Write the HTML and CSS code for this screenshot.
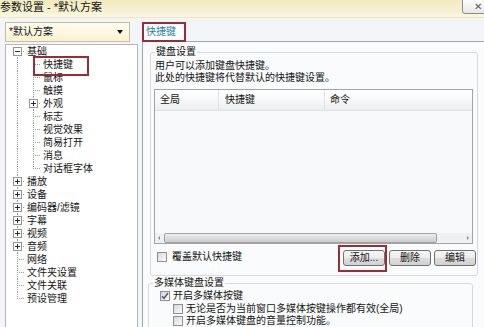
FILE: index.html
```html
<!DOCTYPE html>
<html lang="zh-CN">
<head>
  <meta charset="UTF-8">
  <meta name="viewport" content="width=device-width, initial-scale=1.0">
  <title>参数设置 - *默认方案</title>
  <link rel="stylesheet" href="styles.css">
</head>
<body>
  <div class="window">
    <div class="titlebar">
      <span class="title">参数设置 - *默认方案</span>
      <span class="close">✕</span>
    </div>

    <div class="main">
      <div class="side">
        <div class="combo">
          <span>*默认方案</span>
          <span class="arrow"></span>
        </div>

        <div class="tree">
          <div class="row"><i class="g f"><b class="bx minus"></b></i><span class="lbl">基础</span></div>
          <div class="row mark"><i class="g v"></i><i class="g t"></i><span class="lbl">快捷键</span></div>
          <div class="row"><i class="g v"></i><i class="g t"></i><span class="lbl">鼠标</span></div>
          <div class="row"><i class="g v"></i><i class="g t"></i><span class="lbl">触摸</span></div>
          <div class="row"><i class="g v"></i><i class="g t"><b class="bx plus"></b></i><span class="lbl">外观</span></div>
          <div class="row"><i class="g v"></i><i class="g t"></i><span class="lbl">标志</span></div>
          <div class="row"><i class="g v"></i><i class="g t"></i><span class="lbl">视觉效果</span></div>
          <div class="row"><i class="g v"></i><i class="g t"></i><span class="lbl">简易打开</span></div>
          <div class="row"><i class="g v"></i><i class="g t"></i><span class="lbl">消息</span></div>
          <div class="row"><i class="g v"></i><i class="g l"></i><span class="lbl">对话框字体</span></div>
          <div class="row"><i class="g t"><b class="bx plus"></b></i><span class="lbl">播放</span></div>
          <div class="row"><i class="g t"><b class="bx plus"></b></i><span class="lbl">设备</span></div>
          <div class="row"><i class="g t"><b class="bx plus"></b></i><span class="lbl">编码器/滤镜</span></div>
          <div class="row"><i class="g t"><b class="bx plus"></b></i><span class="lbl">字幕</span></div>
          <div class="row"><i class="g t"><b class="bx plus"></b></i><span class="lbl">视频</span></div>
          <div class="row"><i class="g t"><b class="bx plus"></b></i><span class="lbl">音频</span></div>
          <div class="row"><i class="g t"></i><span class="lbl">网络</span></div>
          <div class="row"><i class="g t"></i><span class="lbl">文件夹设置</span></div>
          <div class="row"><i class="g t"></i><span class="lbl">文件关联</span></div>
          <div class="row"><i class="g l"></i><span class="lbl">预设管理</span></div>
        </div>
      </div>

      <div class="content">
        <div class="tabs">
          <div class="tab">快捷键</div>
        </div>

        <div class="panel">
          <fieldset class="group keys">
            <legend>键盘设置</legend>
            <p class="hint">用户可以添加键盘快捷键。<br>此处的快捷键将代替默认的快捷键设置。</p>

            <div class="list">
              <div class="list-head">
                <span class="col c1">全局</span>
                <span class="col c2">快捷键</span>
                <span class="col c3">命令</span>
              </div>
              <div class="list-body"></div>
              <div class="hscroll">
                <span class="sb-btn left"></span>
                <span class="sb-track"><span class="sb-thumb"></span></span>
                <span class="sb-btn right"></span>
              </div>
            </div>

            <div class="list-actions">
              <label class="check"><span class="cb"></span>覆盖默认快捷键</label>
              <div class="buttons">
                <span class="hl"><button>添加...</button></span>
                <button>删除</button>
                <button>编辑</button>
              </div>
            </div>
          </fieldset>

          <fieldset class="group media">
            <legend>多媒体键盘设置</legend>
            <label class="opt">
              <span class="cb on">
                <svg width="8" height="8" viewBox="0 0 8 8"><path d="M1 4.2 L3 6.4 L7 1" fill="none" stroke="#3c4f78" stroke-width="1.4"/></svg>
              </span>
              开启多媒体按键
            </label>
            <label class="opt sub"><span class="cb"></span>无论是否为当前窗口多媒体按键操作都有效(全局)</label>
            <label class="opt sub last"><span class="cb"></span>开启多媒体键盘的音量控制功能。</label>
          </fieldset>
        </div>
      </div>
    </div>
  </div>
</body>
</html>
```

FILE: styles.css
```css
:root {
  --text: #141414;
  --mark: #9b2c36;
  --border: #a3a3a3;
  --group-border: #d6dadf;
  --bg-window: #f4f5f9;
  --bg-panel: #fafbfc;
  --dots-v: repeating-linear-gradient(to bottom, #9a9a9a 0 1px, transparent 1px 2px);
  --dots-h: repeating-linear-gradient(to right, #9a9a9a 0 1px, transparent 1px 2px);
}

* {
  box-sizing: border-box;
}

body {
  margin: 0;
  background: var(--bg-window);
  font-family: "Liberation Sans", "Noto Sans CJK SC", sans-serif;
  font-size: 10px;
  color: var(--text);
  overflow: hidden;
}

.window {
  width: 484px;
  height: 327px;
  overflow: hidden;
}

/* title bar */
.titlebar {
  height: 18px;
  display: flex;
  justify-content: space-between;
  align-items: flex-start;
  background: linear-gradient(#f2eac0, #f7f1d3 70%, #fbf8e7);
  border-bottom: 1px solid #efe5b5;
}

.title {
  font-size: 11px;
  line-height: 15px;
}

.close {
  width: 32px;
  height: 15px;
  margin-top: -1px;
  margin-right: -10px;
  border: 1px solid #8c8c8c;
  border-radius: 0 0 0 3px;
  background: linear-gradient(#fdfdfd, #e8e8e8);
  font-size: 10px;
  line-height: 13px;
  padding-left: 11px;
  color: #555;
}

.main {
  display: flex;
  padding-top: 4px;
}

/* left side */
.side {
  width: 133px;
  margin-left: 5px;
  display: flex;
  flex-direction: column;
  gap: 2px;
}

.combo {
  width: 125px;
  height: 20px;
  border: 1px solid #c2bda3;
  background: linear-gradient(#fffdf1, #f9f2cf);
  display: flex;
  align-items: center;
  justify-content: space-between;
  padding: 0 6px 0 3px;
  line-height: 18px;
}

.arrow {
  width: 0;
  height: 0;
  border-left: 3.5px solid transparent;
  border-right: 3.5px solid transparent;
  border-top: 4px solid #111;
}

.tree {
  height: 300px;
  background: #fff;
  border: 1px solid #b5b5b5;
  border-bottom: none;
  padding: 0 0 0 3px;
}

.row {
  display: flex;
  height: 13px;
  line-height: 13px;
  white-space: nowrap;
}

.row.mark {
  position: relative;
}

.row.mark::after {
  content: '';
  position: absolute;
  left: 24px;
  top: -2px;
  width: 52px;
  height: 16px;
  border: 2px solid var(--mark);
}

.lbl {
  margin-left: 2px;
}

.g {
  flex: none;
  width: 16px;
  height: 13px;
  display: flex;
  align-items: center;
  background-repeat: no-repeat;
}

.g.v {
  background-image: var(--dots-v);
  background-size: 1px 100%;
  background-position: 8px 0;
}

.g.t {
  background-image: var(--dots-v), var(--dots-h);
  background-size: 1px 100%, 8px 1px;
  background-position: 8px 0, 8px 6px;
}

.g.l {
  background-image: var(--dots-v), var(--dots-h);
  background-size: 1px 7px, 8px 1px;
  background-position: 8px 0, 8px 6px;
}

.g.f {
  background-image: var(--dots-v), var(--dots-h);
  background-size: 1px 7px, 8px 1px;
  background-position: 8px 6px, 8px 6px;
}

.bx {
  width: 9px;
  height: 9px;
  margin-left: 4px;
  border: 1px solid #939393;
  background-color: #fff;
  background-repeat: no-repeat;
}

.bx.minus {
  background-image: linear-gradient(#2b2b2b, #2b2b2b);
  background-size: 5px 1px;
  background-position: 1px 3px;
}

.bx.plus {
  background-image: linear-gradient(#2b2b2b, #2b2b2b), linear-gradient(#2b2b2b, #2b2b2b);
  background-size: 5px 1px, 1px 5px;
  background-position: 1px 3px, 3px 1px;
}

/* right side */
.content {
  flex: 1;
  margin-left: 4px;
}

.tabs {
  display: flex;
}

.tab {
  position: relative;
  z-index: 1;
  width: 44px;
  height: 20px;
  margin-bottom: -1px;
  border: 2px solid var(--mark);
  background: #fff;
  color: #2c7f9f;
  padding-left: 2px;
  line-height: 16px;
}

.panel {
  height: 290px;
  border-top: 1px solid #a2a6ad;
  border-left: 1px solid #a2a6ad;
  background: var(--bg-panel);
  padding-top: 4px;
}

.group {
  border: 1px solid var(--group-border);
  border-radius: 3px;
  padding: 0 4px 3px 4px;
  min-width: 0;
}

.group legend {
  padding: 0 1px;
  line-height: 12px;
}

.keys {
  margin: 0 6px 0 7px;
}

.media {
  margin: 1px 11px 0 5px;
}

.hint {
  margin: 2px 0 0 0;
  line-height: 12px;
}

.list {
  margin: 5px 0 0 -1px;
  height: 155px;
  border: 1px solid var(--border);
  display: flex;
  flex-direction: column;
  background: #f8f9fb;
}

.list-head {
  height: 21px;
  display: flex;
  background: linear-gradient(#ffffff, #f7f8f9 50%, #eceef0);
  border-bottom: 1px solid #e0e2e5;
}

.col {
  line-height: 20px;
  border-right: 1px solid #dfe1e4;
  padding-left: 5px;
}

.c1 {
  width: 64px;
}

.c2 {
  width: 106px;
  padding-left: 6px;
}

.c3 {
  flex: 1;
  border-right: none;
}

.list-body {
  flex: 1;
}

.hscroll {
  height: 10px;
  display: flex;
  background: #eef0f1;
}

.sb-btn {
  width: 8px;
  display: flex;
  align-items: center;
  justify-content: center;
}

.sb-btn::before {
  content: '';
  border-top: 2px solid transparent;
  border-bottom: 2px solid transparent;
}

.sb-btn.left::before {
  border-right: 2px solid #8a8a8a;
}

.sb-btn.right::before {
  border-left: 2px solid #8a8a8a;
}

.sb-track {
  flex: 1;
  padding: 0 1px;
}

.sb-thumb {
  display: block;
  width: 273px;
  height: 10px;
  border: 1px solid #a2a2a2;
  border-radius: 2px;
  background: linear-gradient(#f0f0f0, #dcdcdc 50%, #cdcdcd);
}

.list-actions {
  display: flex;
  justify-content: space-between;
  align-items: flex-start;
  margin: 1px -3px 0 0;
  height: 27px;
}

.check {
  display: flex;
  align-items: center;
  gap: 5px;
  margin: 6px 0 0 2px;
  height: 12px;
  line-height: 12px;
}

.cb {
  flex: none;
  width: 10px;
  height: 10px;
  border: 1px solid #8f8f8f;
  background: linear-gradient(135deg, #d8d8d8, #fbfbfb);
  display: flex;
  align-items: center;
  justify-content: center;
}

.cb svg {
  display: block;
}

.buttons {
  display: flex;
  align-items: flex-start;
  gap: 2px;
}

.buttons > button {
  margin-top: 5px;
}

.buttons > button:last-child {
  margin-left: 1px;
}

.hl {
  height: 27px;
  border: 2px solid var(--mark);
  padding: 3px 0 4px 3px;
}

button {
  display: block;
  width: 42px;
  height: 16px;
  padding: 0;
  font: inherit;
  line-height: 14px;
  color: var(--text);
  border: 1px solid #707070;
  border-radius: 3px;
  background: linear-gradient(#f6f6f6, #ebebeb 50%, #dddddd 51%, #d2d2d2);
}

.opt {
  display: flex;
  align-items: center;
  gap: 3px;
  height: 13px;
  line-height: 13px;
  margin-left: 7px;
  white-space: nowrap;
}

.opt.sub {
  margin-left: 20px;
}

.opt.last {
  height: 12px;
  line-height: 12px;
}
```
